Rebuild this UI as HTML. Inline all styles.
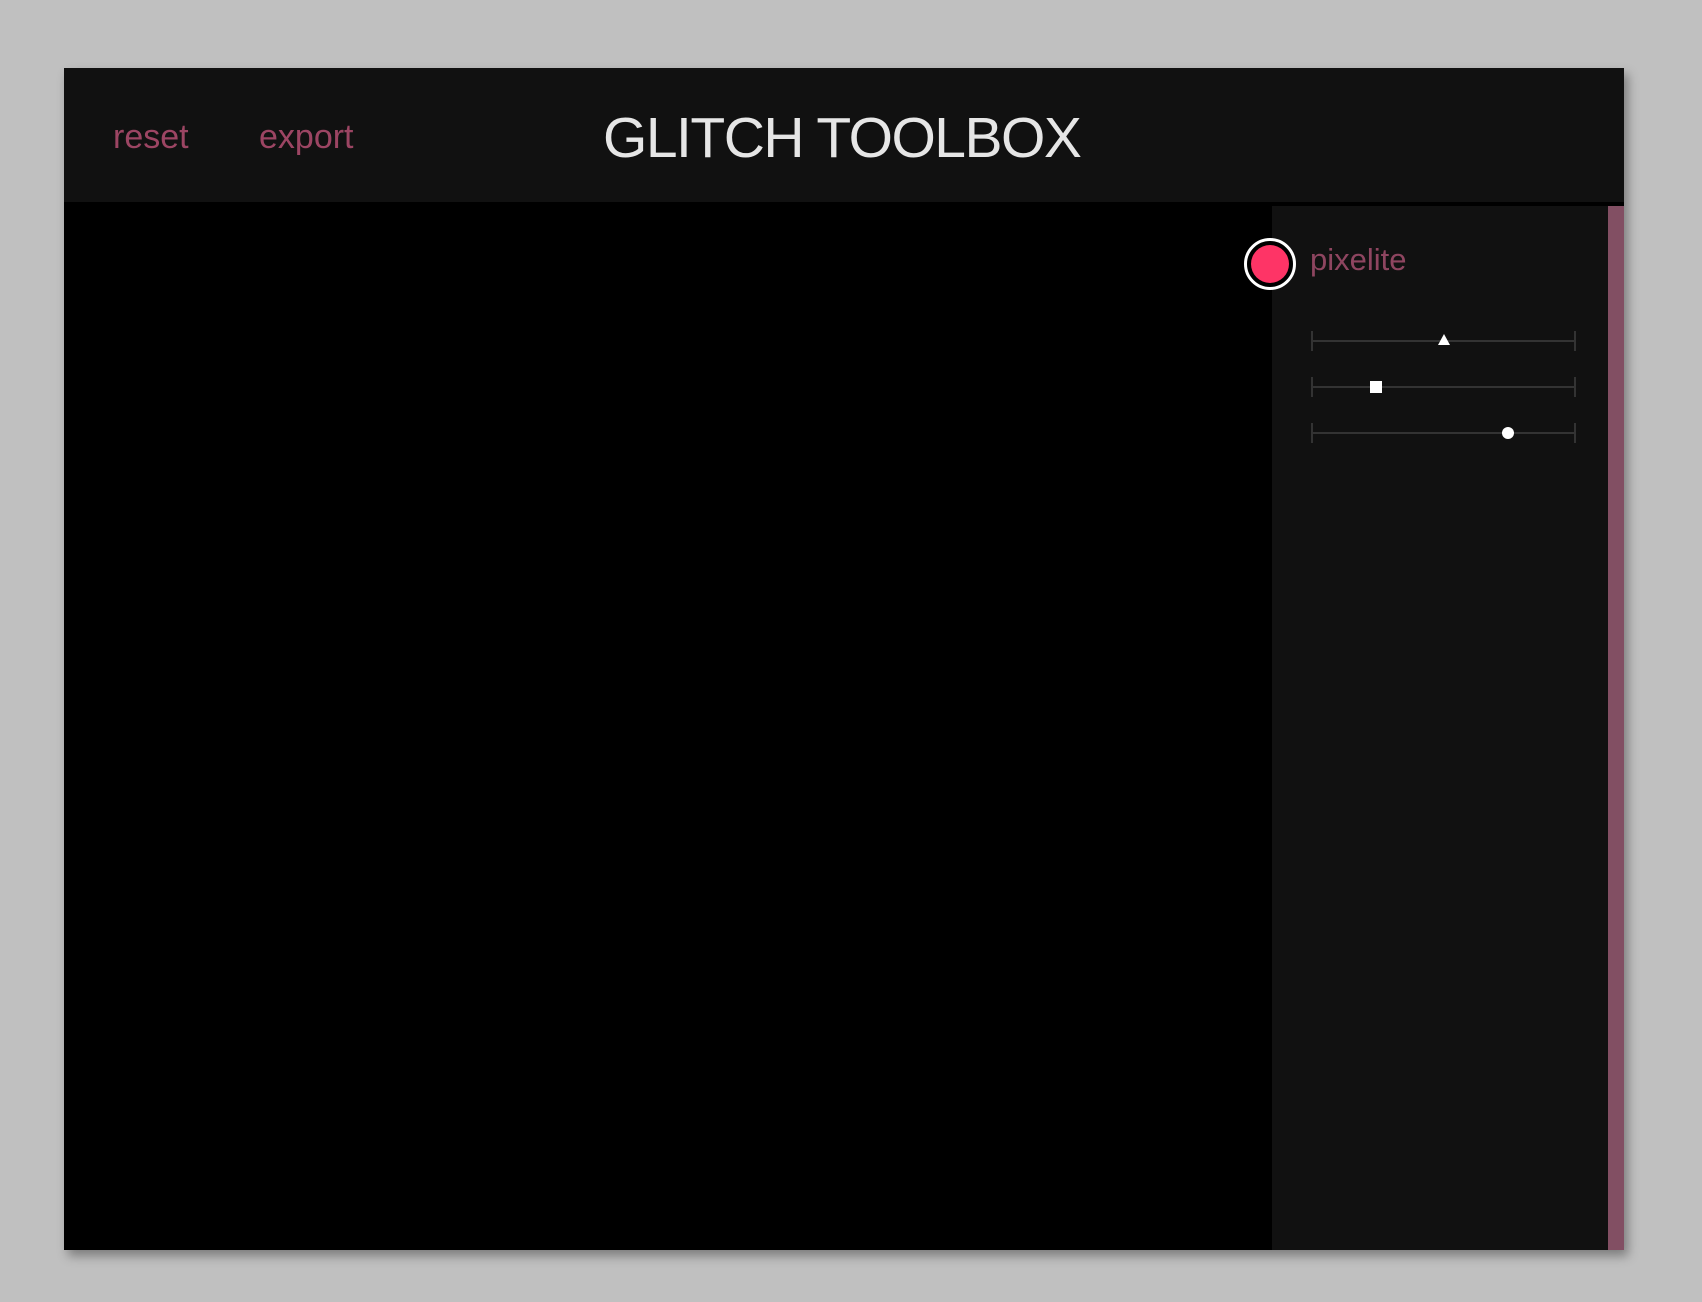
<!DOCTYPE html>
<html><head><style>
*{margin:0;padding:0;box-sizing:border-box}
body{width:1702px;height:1302px;background:#c0c0c0;position:relative;overflow:hidden;font-family:"Liberation Sans",sans-serif}
#win{position:absolute;left:64px;top:68px;width:1560px;height:1182px;background:#000;box-shadow:4px 6px 10px rgba(0,0,0,.35)}
#hdr{position:absolute;left:0;top:0;width:1560px;height:134px;background:#111}
.lnk{position:absolute;top:52px;font-size:34px;color:#9c4563;line-height:1}
#title{position:absolute;left:539px;top:42px;font-size:57px;color:#e6e6e6;line-height:1;letter-spacing:-1.5px;white-space:nowrap}
#panel{position:absolute;left:1208px;top:138px;width:336px;height:1044px;background:#111}
#bar{position:absolute;left:1544px;top:138px;width:16px;height:1044px;background:#824f63}
.dot{position:absolute;left:1180px;top:170px;width:52px;height:52px;border-radius:50%;background:#000;border:3px solid #fff}
.dot::after{content:"";position:absolute;left:4px;top:4px;width:38px;height:38px;border-radius:50%;background:#fe3466}
#pl{position:absolute;left:1246px;top:176px;font-size:31px;color:#8e4560;line-height:1}
.sl{position:absolute;left:1247px;width:265px;height:20px}
.sl .ln{position:absolute;left:0;right:0;top:9px;height:2px;background:#333}
.sl .t{position:absolute;top:0;width:2px;height:20px;background:#333}
</style></head><body>
<div id="win">
<div id="hdr">
<div class="lnk" style="left:49px">reset</div>
<div class="lnk" style="left:195px">export</div>
<div id="title">GLITCH TOOLBOX</div>
</div>
<div id="panel"></div>
<div id="bar"></div>
<div class="dot"></div>
<div id="pl">pixelite</div>
<div class="sl" style="top:263px"><div class="ln"></div><div class="t" style="left:0"></div><div class="t" style="right:0"></div>
<svg style="position:absolute;left:126px;top:3px" width="14" height="12"><polygon points="7,0 13,11 1,11" fill="#fff"/></svg></div>
<div class="sl" style="top:309px"><div class="ln"></div><div class="t" style="left:0"></div><div class="t" style="right:0"></div>
<div style="position:absolute;left:59px;top:4px;width:12px;height:12px;background:#fff"></div></div>
<div class="sl" style="top:355px"><div class="ln"></div><div class="t" style="left:0"></div><div class="t" style="right:0"></div>
<div style="position:absolute;left:191px;top:4px;width:12px;height:12px;border-radius:50%;background:#fff"></div></div>
</div>
</body></html>
